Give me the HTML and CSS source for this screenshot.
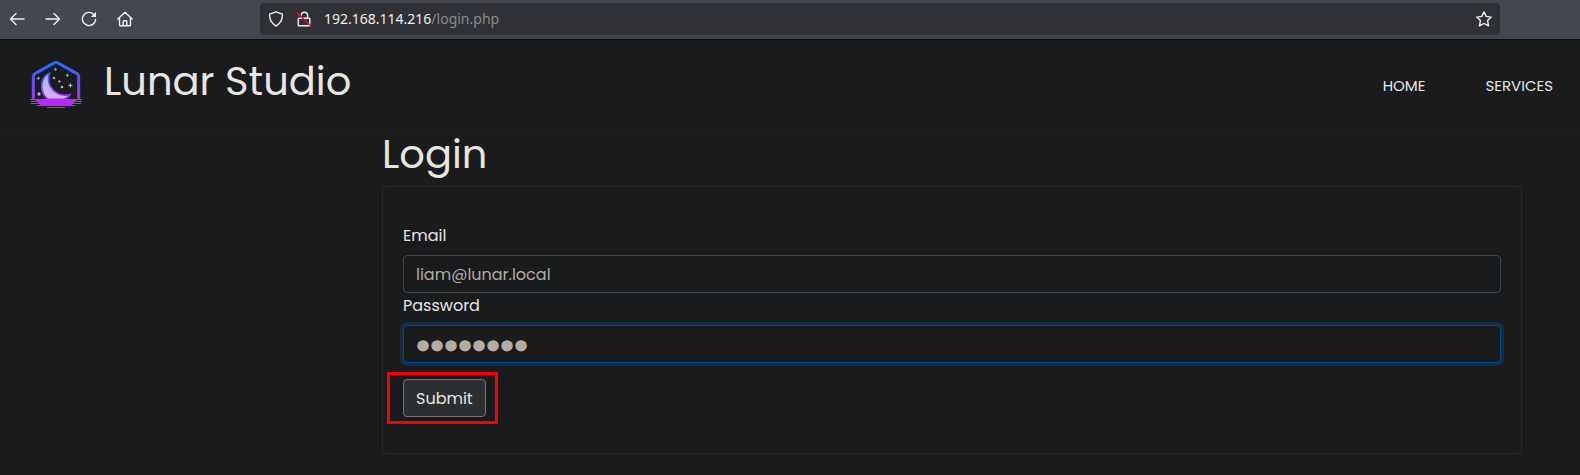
FILE: index.html
```html
<!DOCTYPE html>
<html lang="en">
<head>
    <meta charset="UTF-8">
    <meta name="viewport" content="width=device-width, initial-scale=1.0">
    <title>Lunar Studio</title>
    <link rel="stylesheet" href="styles.css">
</head>
<body>
    <!-- Browser toolbar -->
    <div class="toolbar">
        <div class="toolbar-buttons">
            <button type="button" aria-label="Back">
                <svg viewBox="0 0 16 16"><path d="M15 8H1.5M7 2.5L1.5 8L7 13.5"/></svg>
            </button>
            <button type="button" aria-label="Forward">
                <svg viewBox="0 0 16 16"><path d="M1 8h13.500M9 2.500L14.500 8L9 13.500"/></svg>
            </button>
            <button type="button" aria-label="Reload">
                <svg viewBox="0 0 16 16"><path d="M12.600 3.200A6.600 6.600 0 1 0 14.600 8.500"/><path class="solid" d="M15 .8v5.200H9.800z"/></svg>
            </button>
            <button type="button" aria-label="Home">
                <svg viewBox="0 0 16 16"><path d="M.8 8L8 1.200L15.200 8M2.500 6.800v7.200q0 .8.800.8h9.400q.8 0 .8-.8V6.800M6.200 14.500v-4q0-.8.800-.8h2q.8 0 .8.800v4"/></svg>
            </button>
        </div>
        <div class="url-bar">
            <svg viewBox="0 0 16 16"><path d="M8 .8L14.400 3.200q.4 7.800-6.400 12Q1.200 11 1.600 3.200z"/></svg>
            <svg viewBox="0 0 16 16"><path d="M5.200 4.500a3.200 3.200 0 0 1 6.400 0V7M3 7.200h10q.8 0 .8.800v6q0 .8-.8.800H3q-.8 0-.8-.8V8q0-.8.800-.8z"/><path class="slash" d="M1 1.500L15 15"/></svg>
            <span class="url"><b>192.168.114.216</b>/login.php</span>
            <button type="button" aria-label="Bookmark">
                <svg viewBox="0 0 16 16"><path d="M8 .9L10.200 5.400L15.200 6.100L11.600 9.600L12.500 14.900L8 12.500L3.500 14.900L4.400 9.600L.8 6.100L5.800 5.400z"/></svg>
            </button>
        </div>
    </div>

    <!-- Navbar -->
    <header class="navbar">
        <svg class="logo" viewBox="30 33 156 141" aria-hidden="true">
            <defs>
                <linearGradient id="frame" x1="0" y1="33" x2="0" y2="174" gradientUnits="userSpaceOnUse">
                    <stop offset="0" stop-color="#1a6dff"/>
                    <stop offset="1" stop-color="#c822ff"/>
                </linearGradient>
                <linearGradient id="moon" x1="0" y1="68" x2="0" y2="148" gradientUnits="userSpaceOnUse">
                    <stop offset="0" stop-color="#a3b8ff"/>
                    <stop offset="1" stop-color="#dfaeff"/>
                </linearGradient>
            </defs>
            <path d="M40 146V80Q40 74 46 70L100 40Q108 35 116 40L170 70Q176 74 176 80V146" fill="none" stroke="url(#frame)" stroke-width="9"/>
            <path d="M88 70C58 84 58 128 84 148H131Q145 143 150 134C112 143 76 112 88 70z" fill="url(#moon)" stroke="url(#frame)" stroke-width="5"/>
            <path d="M48 147H168V153H162V159H156V165H135V168H81V165H60V159H54V153H48z" fill="#bd25ff"/>
            <path d="M30 148.500H186M33 154.500H186M33 160.500H183M51 166.500H165M81 172.500H135" stroke="#bd25ff" stroke-width="3"/>
            <g fill="#b3a9e8">
                <circle cx="102" cy="84" r="4" fill="#8ba7d8"/>
                <circle cx="126" cy="111" r="4"/>
                <circle cx="57" cy="132" r="5"/>
            </g>
            <path d="M106 53v10M101 58h10M142 71v10M137 76h10M55 80v10M50 85h10M118 90v9M114 94h9" stroke="#83bfdf" stroke-width="2.500"/>
            <path d="M151 98l2 6 6 2-6 2-2 6-2-6-6-2 6-2z" fill="#dcd6ff"/>
        </svg>
        <h1>Lunar Studio</h1>
        <nav>
            <a href="#">Home</a>
            <a href="#">Services</a>
        </nav>
    </header>

    <!-- Login form -->
    <main class="content">
        <h1>Login</h1>
        <form class="card">
            <label for="email">Email</label>
            <input type="text" id="email" name="email" value="liam@lunar.local">
            <label for="password">Password</label>
            <input type="password" id="password" name="password" class="focused" value="password">
            <div class="submit">
                <button type="submit">Submit</button>
            </div>
        </form>
    </main>
</body>
</html>
```

FILE: styles.css
```css
* {
    margin: 0;
    padding: 0;
    box-sizing: border-box;
}

body {
    font-family: 'Poppins', 'Inter', sans-serif;
    font-size: 16px;
    line-height: 24px;
    background-color: #1a1b1c;
    color: #e8e6e3;
}

h1 {
    font-size: 40px;
    font-weight: 400;
    line-height: 48px;
}

/* Browser toolbar */
.toolbar {
    display: flex;
    align-items: center;
    height: 40px;
    padding: 0 80px 1px 8px;
    background-color: #44474f;
    border-bottom: 1px solid #0c0c0d;
}

.toolbar-buttons {
    display: flex;
    gap: 18px;
    width: 252px;
}

.toolbar svg {
    display: block;
    width: 16px;
    height: 16px;
    fill: none;
    stroke: #efefec;
    stroke-width: 1.4;
    stroke-linejoin: round;
    stroke-linecap: round;
}

.toolbar button {
    width: 18px;
    height: 18px;
    border: none;
    background: none;
    display: flex;
    align-items: center;
    justify-content: center;
}

.toolbar .solid {
    fill: #efefec;
    stroke: none;
}

.toolbar .slash {
    stroke: #e0103f;
}

.url-bar {
    flex: 1;
    display: flex;
    align-items: center;
    gap: 12px;
    height: 32px;
    padding: 0 7px 0 8px;
    background-color: #303136;
    border-radius: 4px;
}

.url {
    flex: 1;
    font-family: 'Noto Sans', sans-serif;
    font-size: 14px;
    color: #8b8b8d;
}

.url b {
    font-weight: 400;
    color: #efefec;
}

/* Navbar */
.navbar {
    display: flex;
    align-items: center;
    height: 90px;
    padding: 0 27px 0 30px;
    border-bottom: 1px solid #1e1c1d;
}

.logo {
    width: 52px;
    height: 47px;
    margin-right: 22px;
}

.navbar h1 {
    padding-bottom: 8px;
}

.navbar nav {
    display: flex;
    gap: 60px;
    margin-left: auto;
    padding-top: 2px;
}

.navbar a {
    font-size: 15px;
    text-transform: uppercase;
    text-decoration: none;
    color: #e8e6e3;
}

/* Login form */
.content {
    padding: 0 58px 0 382px;
}

.content h1 {
    margin-bottom: 8px;
}

.card {
    padding: 36px 20px;
    border: 1px solid #262829;
    border-radius: 4px;
}

.card label {
    display: block;
    padding: 1px 0 7px;
}

.card input {
    display: block;
    width: 100%;
    height: 38px;
    padding: 6px 12px;
    font-family: inherit;
    font-size: 16px;
    color: #b2aca2;
    background-color: #1a1b1c;
    border: 1px solid #404548;
    border-radius: 4px;
    outline: none;
}

/* Large password dots */
.card input.focused {
    padding: 2px 12px 0;
    font-size: 34px;
    -webkit-text-stroke: 3px #b2aca2;
    border-color: #00468f;
    box-shadow: 0 0 0 3px #112c47;
}

.submit {
    position: relative;
    width: fit-content;
    margin-top: 16px;
}

.submit button {
    display: block;
    height: 38px;
    padding: 6px 12px;
    font-family: inherit;
    font-size: 16px;
    color: #e8e6e3;
    background-color: #2b2f31;
    border: 1px solid #7b7467;
    border-radius: 4px;
}

/* Red marker around the button */
.submit::after {
    content: "";
    position: absolute;
    inset: -7px -12px -7px -16px;
    border: 3px solid #fc0000;
    pointer-events: none;
}
```
